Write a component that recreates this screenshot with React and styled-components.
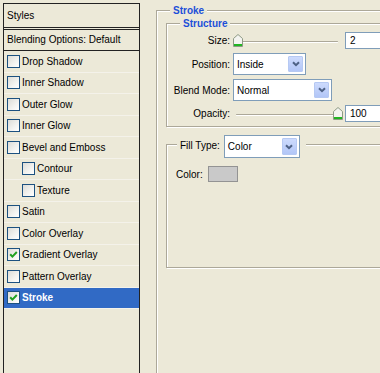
import React from 'react';
import styled, { createGlobalStyle } from 'styled-components';

const GlobalStyle = createGlobalStyle`
  html, body {
    margin: 0;
    padding: 0;
    background: #ece9d8;
    overflow: hidden;
  }
  body {
    font-family: "Liberation Sans", Arial, sans-serif;
    font-size: 10px;
    color: #000;
  }
`;

const styleItems = [
  { name: 'Drop Shadow' },
  { name: 'Inner Shadow' },
  { name: 'Outer Glow' },
  { name: 'Inner Glow' },
  { name: 'Bevel and Emboss' },
  { name: 'Contour', indent: true },
  { name: 'Texture', indent: true },
  { name: 'Satin' },
  { name: 'Color Overlay' },
  { name: 'Gradient Overlay', checked: true },
  { name: 'Pattern Overlay' },
  { name: 'Stroke', checked: true, selected: true },
];

const Dialog = styled.div`
  display: flex;
  align-items: flex-start;
  width: 380px;
  height: 373px;
  overflow: hidden;
`;

/* left list */
const StylesPanel = styled.div`
  box-sizing: border-box;
  flex-shrink: 0;
  width: 137px;
  height: 390px;
  margin: 3px 0 0 3px;
  border: 1px solid #222;
  border-bottom: none;
`;

const PanelHeader = styled.div`
  height: 23px;
  line-height: 23px;
  padding-left: 3px;
  border-bottom: 3px double #222;
`;

const BlendRow = styled.div`
  height: 20px;
  line-height: 20px;
  padding-left: 3px;
  border-bottom: 1px solid #222;
`;

const StyleRow = styled.div`
  box-sizing: border-box;
  height: 21.5px;
  display: flex;
  align-items: center;
  gap: 2px;
  padding-left: ${(p) => (p.$indent ? 18 : 3)}px;
  border-bottom: 1px solid #f4f2ea;
  background: ${(p) => (p.$selected ? '#316ac5' : 'transparent')};
  color: ${(p) => (p.$selected ? '#fff' : '#000')};
  font-weight: ${(p) => (p.$selected ? 'bold' : 'normal')};
`;

const Box = styled.span`
  box-sizing: border-box;
  flex-shrink: 0;
  width: 13px;
  height: 13px;
  border: 1px solid #1c5180;
  background: linear-gradient(135deg, #dcdcd7 0%, #f3f3f0 60%, #fff 100%);
  display: inline-flex;
  align-items: center;
  justify-content: center;
`;

const Checkbox = ({ checked }) => (
  <Box>
    {checked && (
      <svg width="9" height="9" viewBox="0 0 9 9">
        <polyline points="1.2,4.2 3.4,6.6 7.8,2" fill="none" stroke="#21a121" strokeWidth="2" />
      </svg>
    )}
  </Box>
);

/* right side */
const RightPane = styled.div`
  flex-shrink: 0;
  width: 262px;
  margin: 4px 0 0 16px;
`;

const Group = styled.fieldset`
  margin: ${(p) => p.$margin || '0'};
  padding: ${(p) => p.$pad || '0'};
  min-width: 0;
  min-height: ${(p) => p.$minH || 0}px;
  border: 1px solid #aca899;
  box-shadow: inset 1px 1px 0 #fff, 1px 1px 0 #fff;
`;

const Legend = styled.legend`
  margin-left: ${(p) => p.$offset}px;
  padding: 0 3px;
  line-height: 13px;
  font-weight: bold;
  color: #1c4fd8;
  background: #ece9d8;
`;

const FillLegend = styled.legend`
  margin-left: 10px;
  padding: 0 6px 0 3px;
  background: #ece9d8;
`;

const LegendInner = styled.span`
  display: flex;
  align-items: flex-start;
  gap: 4px;
  height: 18px;
  line-height: 22px;
`;

const FormGrid = styled.div`
  display: grid;
  grid-template-columns: 63px auto;
  column-gap: 3px;
  row-gap: 4px;
  align-items: center;
  justify-items: start;
  margin-top: 2px;
`;

const FieldLabel = styled.span`
  justify-self: end;
  text-align: right;
  white-space: nowrap;
`;

const SliderRow = styled.div`
  display: flex;
  align-items: center;
  gap: 2px;
`;

const Slider = styled.div`
  position: relative;
  box-sizing: border-box;
  width: 110px;
  height: 17px;
  padding: 0 5px 0 3px;
  display: flex;
  align-items: center;
`;

const Track = styled.div`
  flex: 1;
  height: 1px;
  margin-top: 1px;
  background: #aca899;
  border-radius: 1px;
  box-shadow: 0 1px 0 #fff;
`;

const Thumb = styled.svg`
  position: absolute;
  top: 2px;
`;

const NumberBox = styled.div`
  box-sizing: border-box;
  width: 45px;
  height: 17px;
  padding-left: 4px;
  line-height: 15px;
  border: 1px solid #7f9db9;
  background: #fff;
`;

const Combo = styled.div`
  box-sizing: border-box;
  flex-shrink: 0;
  display: flex;
  width: ${(p) => p.$w}px;
  height: ${(p) => p.$h || 22}px;
  padding: 2px;
  line-height: normal;
  border: 1px solid #7f9db9;
  background: #fff;
`;

const ComboText = styled.span`
  flex: 1;
  display: flex;
  align-items: center;
  padding-left: 1px;
`;

const ComboButton = styled.span`
  box-sizing: border-box;
  width: 15px;
  display: flex;
  align-items: center;
  justify-content: center;
  border: 1px solid #b6c9f3;
  border-radius: 1px;
  background: linear-gradient(#cddbfd, #b2c6f7);
`;

const ColorRow = styled.div`
  display: flex;
  align-items: center;
  gap: 5px;
  margin-top: 13px;
  padding-left: 9px;
`;

const Swatch = styled.span`
  box-sizing: border-box;
  width: 30px;
  height: 16px;
  border: 1px solid #939393;
  background: ${(p) => p.$color};
`;

const Select = ({ value, width, height }) => (
  <Combo $w={width} $h={height}>
    <ComboText>{value}</ComboText>
    <ComboButton>
      <svg width="8" height="6" viewBox="0 0 8 6">
        <path d="M1 1.2 L4 4.2 L7 1.2" fill="none" stroke="#4d6185" strokeWidth="2" />
      </svg>
    </ComboButton>
  </Combo>
);

const RangeField = ({ value, min, max, text }) => {
  const pct = (value - min) / (max - min);
  return (
    <SliderRow>
      <Slider>
        <Track />
        <Thumb width="10" height="13" viewBox="0 0 10 13" style={{ left: Math.round(pct * 100) }}>
          <path d="M0.5 4.5 L5 0.5 L9.5 4.5 V12.5 H0.5 Z" fill="#f4f4f0" stroke="#8e9a85" />
          <rect x="1" y="10" width="8" height="2" fill="#21b521" />
        </Thumb>
      </Slider>
      <NumberBox>{text}</NumberBox>
    </SliderRow>
  );
};

export default function App() {
  return (
    <>
      <GlobalStyle />
      <Dialog>
        <StylesPanel>
          <PanelHeader>Styles</PanelHeader>
          <BlendRow>Blending Options: Default</BlendRow>
          {styleItems.map((item) => (
            <StyleRow key={item.name} $indent={item.indent} $selected={item.selected}>
              <Checkbox checked={item.checked} />
              {item.name}
            </StyleRow>
          ))}
        </StylesPanel>

        <RightPane>
          <Group $pad="0 0 0 9px" $minH={400}>
            <Legend $offset={4}>Stroke</Legend>
            <Group $pad="0 0 4px 0">
              <Legend $offset={13}>Structure</Legend>
              <FormGrid>
                <FieldLabel>Size:</FieldLabel>
                <RangeField value={2} min={1} max={250} text="2" />
                <FieldLabel>Position:</FieldLabel>
                <Select value="Inside" width={73} />
                <FieldLabel>Blend Mode:</FieldLabel>
                <Select value="Normal" width={99} />
                <FieldLabel>Opacity:</FieldLabel>
                <RangeField value={100} min={0} max={100} text="100" />
              </FormGrid>
            </Group>
            <Group $margin="8px 0 0 0" $pad="0 0 85px 0">
              <FillLegend>
                <LegendInner>
                  Fill Type:
                  <Select value="Color" width={76} height={23} />
                </LegendInner>
              </FillLegend>
              <ColorRow>
                Color:
                <Swatch $color="#c9c9c9" />
              </ColorRow>
            </Group>
          </Group>
        </RightPane>
      </Dialog>
    </>
  );
}
